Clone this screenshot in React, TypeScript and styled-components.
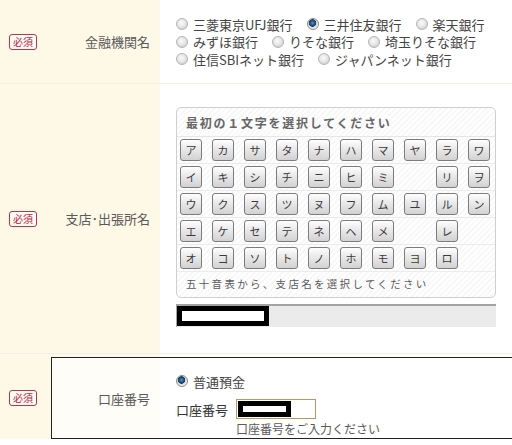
import React from 'react';
import styled, { createGlobalStyle } from 'styled-components';

const GlobalStyle = createGlobalStyle`
  body {
    margin: 0;
    background: #fff;
    font-family: "Noto Sans CJK JP", "Liberation Sans", sans-serif;
    color: #555;
  }
`;

const cream = '#fef8e7';

const Page = styled.div`
  width: 512px;
  height: 445px;
  overflow: hidden;
`;

const Row = styled.div<{ h: number }>`
  display: flex;
  height: ${p => p.h}px;
  border-bottom: 1px solid #f1eee6;
`;

const Head = styled.div`
  width: 160px;
  flex: none;
  display: flex;
  align-items: center;
  background: ${cream};
  padding: 0 10px 0 9px;
  box-sizing: border-box;
`;

const Badge = styled.span`
  display: inline-flex;
  align-items: center;
  justify-content: center;
  width: 28px;
  height: 16px;
  box-sizing: border-box;
  border: 1px solid #b23a48;
  border-radius: 3px;
  background: #fffaf6;
  color: #b8293a;
  font-size: 10px;
  line-height: 1;
  flex: none;
`;

const Label = styled.span`
  flex: 1;
  text-align: right;
  font-size: 13px;
  color: #5a5a5a;
  white-space: nowrap;
`;

const Body = styled.div<{ top?: number }>`
  flex: 1;
  padding: ${p => p.top ?? 0}px 0 0 16px;
  display: flex;
  flex-direction: column;
  justify-content: ${p => (p.top === undefined ? 'center' : 'flex-start')};
`;

const OptLine = styled.div`
  display: flex;
  align-items: center;
  height: 17.5px;
  font-size: 13px;
  color: #444;
  white-space: nowrap;
`;

const Opt = styled.label`
  display: inline-flex;
  align-items: center;
  margin-right: 14px;
`;

const Radio = styled.span<{ on?: boolean }>`
  width: 12px;
  height: 12px;
  box-sizing: border-box;
  border-radius: 50%;
  border: 1px solid ${p => (p.on ? '#8a8a8a' : '#b5b5b5')};
  background: ${p =>
    p.on
      ? 'radial-gradient(circle at 45% 40%, #5c93c2 0, #1c4e7c 2.5px, #133a5e 3.5px, #d8d8d8 4px, #f4f4f4 6px)'
      : 'radial-gradient(circle at 45% 40%, #fafafa 0, #e6e6e6 4px, #d2d2d2 6px)'};
  margin-right: 5px;
  flex: none;
`;

const Panel = styled.div`
  width: 320px;
  box-sizing: border-box;
  border: 1px solid #cfcfcf;
  border-radius: 5px;
  background: repeating-linear-gradient(135deg, #fff 0 2px, #f8f8f8 2px 4px);
`;

const PanelTitle = styled.div`
  height: 28px;
  line-height: 30px;
  padding-left: 9px;
  font-size: 12px;
  font-weight: bold;
  letter-spacing: 1.75px;
  color: #666;
  border-bottom: 1px solid #e6e6e6;
`;

const KeyRow = styled.div`
  display: grid;
  grid-template-columns: repeat(10, 32px);
  align-items: center;
  height: 26px;
  padding-left: 3px;
  border-bottom: 1px solid #ececec;
`;

const Key = styled.span`
  width: 22px;
  height: 22px;
  box-sizing: border-box;
  border: 1px solid #7c7c7c;
  border-radius: 3px;
  background: linear-gradient(#fefefe, #e9e9e9 45%, #d2d2d2);
  display: flex;
  align-items: center;
  justify-content: center;
  font-size: 11px;
  color: #3a3a3a;
`;

const PanelFoot = styled.div`
  height: 25px;
  line-height: 24px;
  padding-left: 9px;
  font-size: 10.5px;
  letter-spacing: 2.3px;
  color: #5a5a5a;
`;

const Bar = styled.div`
  width: 320px;
  height: 23px;
  margin-top: 6px;
  box-sizing: border-box;
  background: #ebebeb;
  border-top: 2px solid #a2a2a2;
  border-left: 1px solid #a2a2a2;
  display: flex;
  align-items: flex-start;
`;

const Redact = styled.span<{ w: number; h: number }>`
  width: ${p => p.w}px;
  height: ${p => p.h}px;
  box-sizing: border-box;
  background: #000;
  padding: 5px;
  display: flex;
  flex: none;
  &::after {
    content: '';
    flex: 1;
    background: #fff;
  }
`;

const AccountRow = styled.div`
  display: flex;
  align-items: center;
  padding-top: 3px;
  background: linear-gradient(to right, ${cream} 160px, #fff 160px);
`;

const BadgeCell = styled.div`
  width: 51px;
  height: 81px;
  flex: none;
  display: flex;
  align-items: center;
  padding-left: 9px;
  box-sizing: border-box;
  background: ${cream};
`;

const Framed = styled.div`
  flex: none;
  width: 480px;
  display: flex;
  height: 82px;
  box-sizing: border-box;
  border: 1px solid #222;
  border-right: none;
  background: #fff;
`;

const FramedHead = styled.div`
  width: 108px;
  flex: none;
  display: flex;
  align-items: center;
  padding-right: 10px;
  box-sizing: border-box;
  background: #fffdf8;
`;

const FieldLine = styled.div`
  display: flex;
  align-items: center;
  font-size: 13px;
  color: #333;
  margin-top: 9px;
  height: 20px;
`;

const Input = styled.span`
  width: 80px;
  height: 20px;
  margin-left: 8px;
  box-sizing: border-box;
  border: 1px solid #b99a5a;
  background: #fff;
  display: flex;
  padding: 1px 25px 1px 1px;
`;

const Help = styled.div`
  margin: 3px 0 0 60px;
  font-size: 12px;
  line-height: 14px;
  color: #5a5a5a;
`;

const banks = [
  [['三菱東京UFJ銀行', false], ['三井住友銀行', true], ['楽天銀行', false]],
  [['みずほ銀行', false], ['りそな銀行', false], ['埼玉りそな銀行', false]],
  [['住信SBIネット銀行', false], ['ジャパンネット銀行', false]],
] as [string, boolean][][];

const kana = [
  ['ア', 'カ', 'サ', 'タ', 'ナ', 'ハ', 'マ', 'ヤ', 'ラ', 'ワ'],
  ['イ', 'キ', 'シ', 'チ', 'ニ', 'ヒ', 'ミ', '', 'リ', 'ヲ'],
  ['ウ', 'ク', 'ス', 'ツ', 'ヌ', 'フ', 'ム', 'ユ', 'ル', 'ン'],
  ['エ', 'ケ', 'セ', 'テ', 'ネ', 'ヘ', 'メ', '', 'レ', ''],
  ['オ', 'コ', 'ソ', 'ト', 'ノ', 'ホ', 'モ', 'ヨ', 'ロ', ''],
];

export default function App() {
  return (
    <Page>
      <GlobalStyle />
      <Row h={83}>
        <Head>
          <Badge>必須</Badge>
          <Label>金融機関名</Label>
        </Head>
        <Body>
          {banks.map((line, i) => (
            <OptLine key={i}>
              {line.map(([name, on]) => (
                <Opt key={name}>
                  <Radio on={on} />
                  {name}
                </Opt>
              ))}
            </OptLine>
          ))}
        </Body>
      </Row>
      <Row h={269}>
        <Head>
          <Badge>必須</Badge>
          <Label>支店･出張所名</Label>
        </Head>
        <Body top={23}>
          <Panel>
            <PanelTitle>最初の１文字を選択してください</PanelTitle>
            {kana.map((r, i) => (
              <KeyRow key={i}>
                {r.map((k, j) => (k ? <Key key={j}>{k}</Key> : <span key={j} />))}
              </KeyRow>
            ))}
            <PanelFoot>五十音表から、支店名を選択してください</PanelFoot>
          </Panel>
          <Bar>
            <Redact w={92} h={20} />
          </Bar>
        </Body>
      </Row>
      <AccountRow>
        <BadgeCell>
          <Badge>必須</Badge>
        </BadgeCell>
        <Framed>
          <FramedHead>
            <Label>口座番号</Label>
          </FramedHead>
          <Body top={14}>
            <OptLine style={{ height: 18 }}>
              <Opt>
                <Radio on />
                普通預金
              </Opt>
            </OptLine>
            <FieldLine>
              口座番号
              <Input>
                <Redact w={53} h={16} />
              </Input>
            </FieldLine>
            <Help>口座番号をご入力ください</Help>
          </Body>
        </Framed>
      </AccountRow>
    </Page>
  );
}
